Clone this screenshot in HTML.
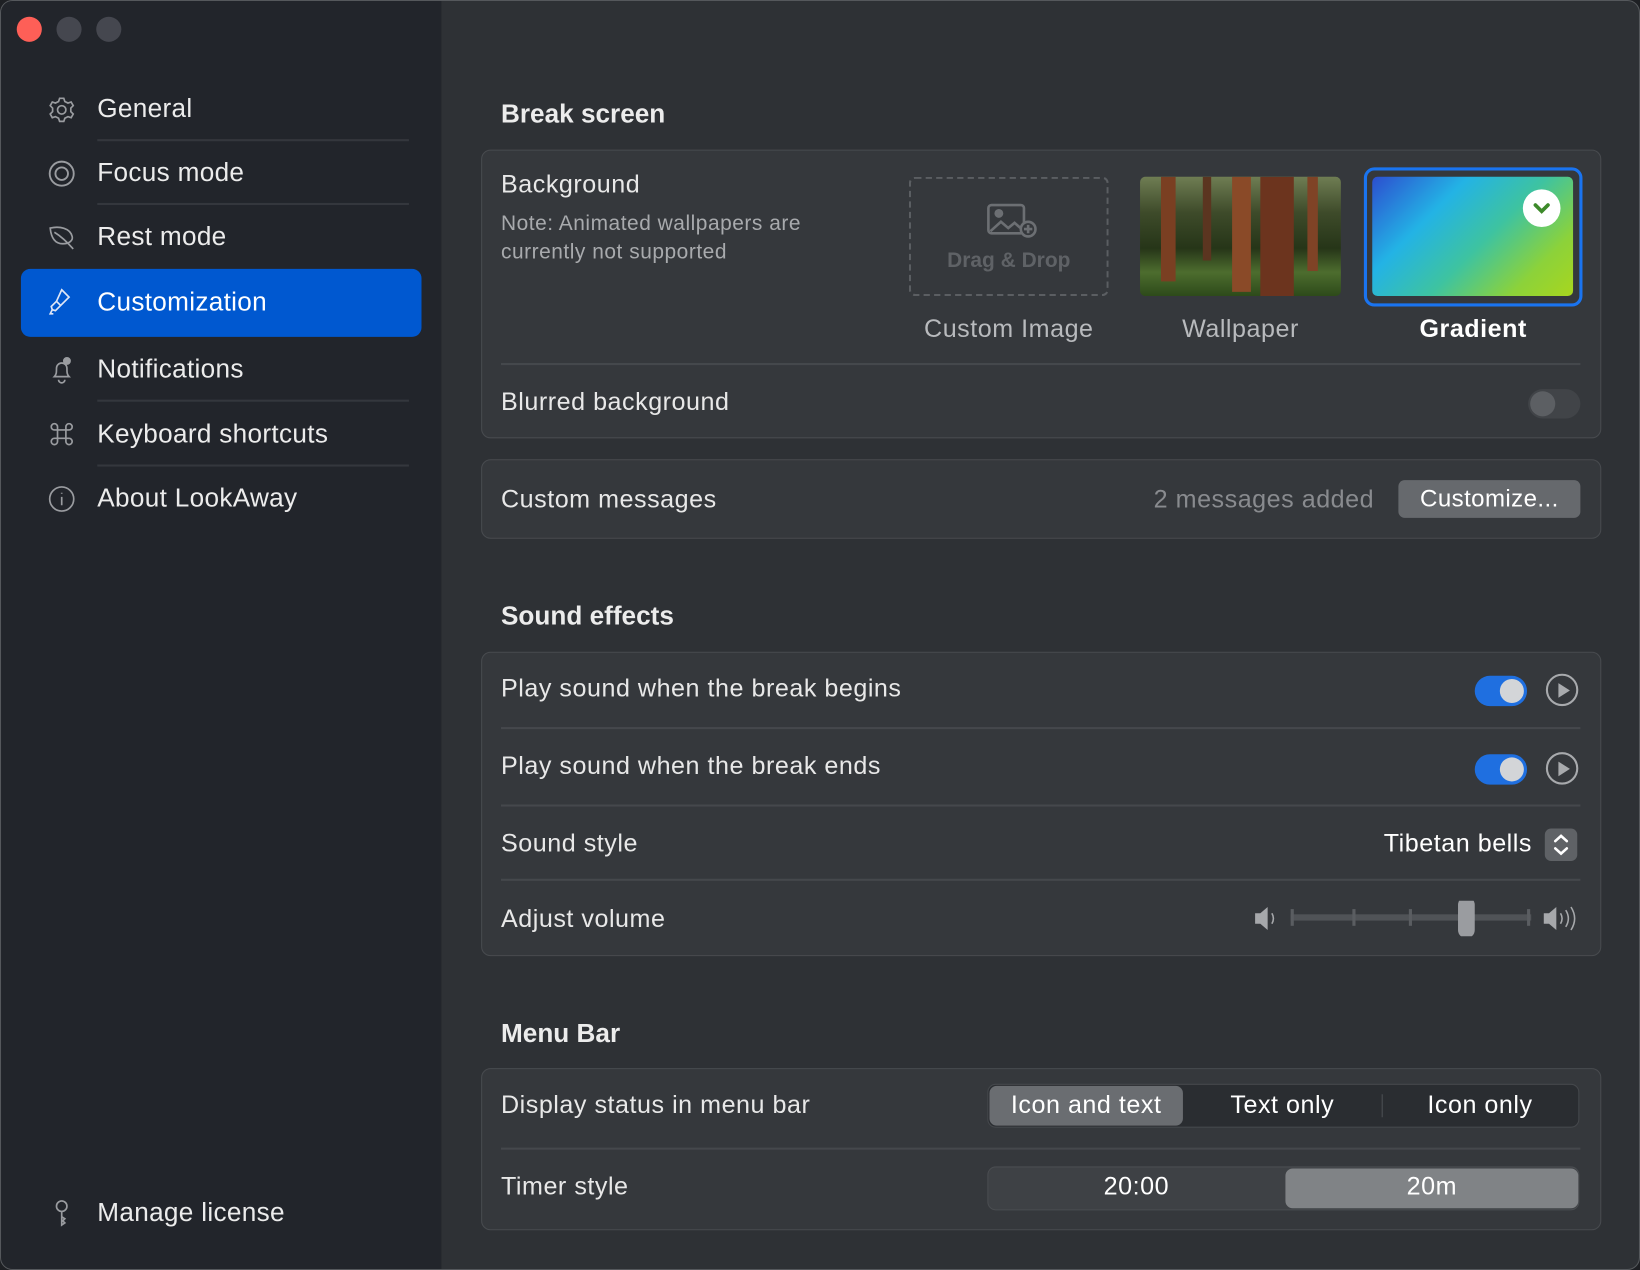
<!DOCTYPE html>
<html><head><meta charset="utf-8"><style>
*{box-sizing:border-box;margin:0;padding:0}
html,body{width:1640px;height:1270px;overflow:hidden;background:#1e2024}
#w{position:absolute;left:0;top:0;width:1568px;height:1214px;transform:scale(1.04592,1.04613);transform-origin:0 0;font-family:"Liberation Sans",sans-serif;color:#e6e6e6;background:#2e3135;border-radius:12px;overflow:hidden;border:1px solid #55585c}
#sb{position:absolute;left:0;top:0;width:421px;height:1214px;background:#22252b}
.dot{position:absolute;top:15px;width:24px;height:24px;border-radius:50%;background:#45474f}
.nav{position:absolute;left:92px;font-size:25px;color:#ececec;letter-spacing:0.3px}
.ic{position:absolute;left:44px;width:28px;height:28px}
.sep{position:absolute;left:92px;width:298px;height:2px;background:#34373d}
.h{position:absolute;left:478px;font-size:25px;font-weight:bold;color:#ececec}
.card{position:absolute;left:459px;width:1071px;background:#35383c;border:1.5px solid #484b4f;border-radius:9px}
.t{position:absolute;font-size:24px;color:#e8e8e8;letter-spacing:0.5px}
.ln{position:absolute;left:478px;width:1032px;height:2px;background:#45484c}
.tog{position:absolute;width:50px;height:29px;border-radius:15px;background:#1f6fe0}
.tog::after{content:"";position:absolute;right:3px;top:3px;width:23px;height:23px;border-radius:50%;background:#d3d5d8}
.play{position:absolute;width:31px;height:31px;border:2px solid #a8aaad;border-radius:50%}
.play::after{content:"";position:absolute;left:10px;top:7px;border-left:11px solid #a8aaad;border-top:7px solid transparent;border-bottom:7px solid transparent}
</style></head><body><div id="w">
<div id="sb">
<div class="dot" style="left:15px;background:#fe5f57"></div><div class="dot" style="left:53px"></div><div class="dot" style="left:91px"></div>
<svg class="ic" style="top:90px" viewBox="0 0 28 28" fill="none" stroke="#9a9ca0" stroke-width="1.6"><circle cx="14" cy="14" r="4"/><path d="M12 3h4l1 3 3 1.5 3-1 2 3.5-2.3 2.3v3.4L25 18l-2 3.5-3-1L17 22l-1 3h-4l-1-3-3-1.5-3 1L3 18l2.3-2.3v-3.4L3 10l2-3.5 3 1L11 6z"/></svg>
<div class="nav" style="top:89px">General</div><div class="sep" style="top:132px"></div>
<svg class="ic" style="top:151px" viewBox="0 0 28 28" fill="none" stroke="#9a9ca0" stroke-width="1.8"><circle cx="14" cy="14" r="11.5"/><circle cx="14" cy="14" r="6"/></svg>
<div class="nav" style="top:150px">Focus mode</div><div class="sep" style="top:193px"></div>
<svg class="ic" style="top:212px" viewBox="0 0 28 28" fill="none" stroke="#9a9ca0" stroke-width="1.6"><path d="M3 5c9-2 19 0 21 8 1 4-3 7-9 7-7 0-11-5-12-15zM7 9c5 3 11 8 18 16"/></svg>
<div class="nav" style="top:211px">Rest mode</div>
<div style="position:absolute;left:19px;top:256px;width:383px;height:65px;background:#0058d0;border-radius:9px"></div>
<svg class="ic" style="top:274px" viewBox="0 0 28 28" fill="none" stroke="#dfe6f5" stroke-width="1.6"><path d="M14 2l7 7-8 8-4-4zM9 13l-5 5 1 3 3 1 5-5"/><path d="M5 21l-2 4 3 0"/></svg>
<div class="nav" style="top:274px;color:#fff">Customization</div>
<svg class="ic" style="top:339px" viewBox="0 0 28 28" fill="none" stroke="#9a9ca0" stroke-width="1.6"><path d="M7 20c2-2 2-4 2-8a5 5 0 0 1 10 0c0 4 0 6 2 8zM11 23a3 3 0 0 0 6 0"/><circle cx="19" cy="5" r="3" fill="#9a9ca0"/></svg>
<div class="nav" style="top:338px">Notifications</div><div class="sep" style="top:381px"></div>
<svg class="ic" style="top:400px" viewBox="0 0 28 28" fill="none" stroke="#9a9ca0" stroke-width="1.6"><path d="M10 10h8v8h-8zM10 10H7a3 3 0 1 1 3-3zM18 10V7a3 3 0 1 1 3 3zM18 18h3a3 3 0 1 1-3 3zM10 18v3a3 3 0 1 1-3-3z"/></svg>
<div class="nav" style="top:400px">Keyboard shortcuts</div><div class="sep" style="top:443px"></div>
<svg class="ic" style="top:462px" viewBox="0 0 28 28" fill="none" stroke="#9a9ca0" stroke-width="1.6"><circle cx="14" cy="14" r="11.5"/><path d="M14 12v8M14 8v1"/></svg>
<div class="nav" style="top:461px">About LookAway</div>
<svg class="ic" style="top:1144px" viewBox="0 0 28 28" fill="none" stroke="#9a9ca0" stroke-width="1.6"><circle cx="14" cy="8" r="5"/><path d="M14 13v13l3-2-2-2 2-2-3-2"/></svg>
<div class="nav" style="top:1144px">Manage license</div>
</div>

<div class="h" style="top:94px">Break screen</div>
<div class="card" style="top:142px;height:276px"></div>
<div class="t" style="left:478px;top:162px">Background</div>
<div class="t" style="left:478px;top:200px;font-size:20px;color:#a8aaad;line-height:27px">Note: Animated wallpapers are<br>currently not supported</div>
<div style="position:absolute;left:868px;top:168px;width:191px;height:114px;border:2px dashed #5b5e62;border-radius:6px"></div>
<svg style="position:absolute;left:942px;top:192px" width="50" height="36" viewBox="0 0 50 36" fill="none" stroke="#6c6f73" stroke-width="2.5"><rect x="2" y="3" width="34" height="27" rx="3"/><circle cx="12" cy="11" r="3" fill="#6c6f73"/><path d="M4 28l10-9 7 6 6-5 8 7"/><circle cx="40" cy="26" r="7" fill="#35383c"/><path d="M40 22v8M36 26h8"/></svg>
<div class="t" style="left:868px;top:237px;width:191px;text-align:center;font-size:20px;font-weight:bold;color:#5f6266;letter-spacing:0">Drag &amp; Drop</div>
<div style="position:absolute;left:1089px;top:168px;width:192px;height:114px;border-radius:5px;background:linear-gradient(180deg,#6f7d53 0%,#3e4b2a 30%,#263518 60%,#4d6d2e 80%,#2d4a1a 100%);overflow:hidden">
<div style="position:absolute;left:20px;top:0;width:14px;height:100px;background:#7a3f22"></div>
<div style="position:absolute;left:88px;top:0;width:18px;height:110px;background:#8a4a28"></div>
<div style="position:absolute;left:115px;top:0;width:32px;height:114px;background:#6c341e"></div>
<div style="position:absolute;left:160px;top:0;width:10px;height:90px;background:#7f4326"></div>
<div style="position:absolute;left:60px;top:0;width:8px;height:80px;background:#5b3520"></div></div>
<div style="position:absolute;left:1303px;top:159px;width:209px;height:133px;border:3px solid #1a74f0;border-radius:10px"></div>
<div style="position:absolute;left:1311px;top:168px;width:192px;height:114px;border-radius:5px;background:linear-gradient(135deg,#2c4ecf 0%,#23b3e5 30%,#3ec3a0 55%,#8cd23a 80%,#a8d61e 100%)"></div>
<div style="position:absolute;left:1455px;top:180px;width:36px;height:36px;border-radius:50%;background:#fff"></div>
<svg style="position:absolute;left:1455px;top:180px" width="36" height="36" viewBox="0 0 36 36" fill="none" stroke="#3d8a2a" stroke-width="3.5" stroke-linecap="round"><path d="M12 15l6 6 6-6"/></svg>
<div class="t" style="left:868px;top:300px;width:191px;text-align:center;color:#b8babd">Custom Image</div>
<div class="t" style="left:1089px;top:300px;width:192px;text-align:center;color:#b8babd">Wallpaper</div>
<div class="t" style="left:1303px;top:300px;width:209px;text-align:center;font-weight:bold;color:#fff">Gradient</div>
<div class="ln" style="top:346px"></div>
<div class="t" style="left:478px;top:370px">Blurred background</div>
<div style="position:absolute;left:1460px;top:371px;width:50px;height:28px;border-radius:14px;background:#414448"><div style="position:absolute;left:2px;top:2px;width:24px;height:24px;border-radius:50%;background:#5c5f63"></div></div>

<div class="card" style="top:438px;height:76px"></div>
<div class="t" style="left:478px;top:463px">Custom messages</div>
<div class="t" style="left:1102px;top:463px;color:#898b8f">2 messages added</div>
<div style="position:absolute;left:1336px;top:458px;width:174px;height:36px;border-radius:6px;background:#66696d;font-size:23px;color:#fff;text-align:center;line-height:34px;letter-spacing:0.4px">Customize...</div>

<div class="h" style="top:574px">Sound effects</div>
<div class="card" style="top:622px;height:291px"></div>
<div class="t" style="left:478px;top:644px">Play sound when the break begins</div>
<div class="tog" style="left:1409px;top:645px"></div><div class="play" style="left:1477px;top:643px"></div>
<div class="ln" style="top:694px"></div>
<div class="t" style="left:478px;top:718px">Play sound when the break ends</div>
<div class="tog" style="left:1409px;top:720px"></div><div class="play" style="left:1477px;top:718px"></div>
<div class="ln" style="top:768px"></div>
<div class="t" style="left:478px;top:792px">Sound style</div>
<div class="t" style="left:1322px;top:792px;color:#fff">Tibetan bells</div>
<div style="position:absolute;left:1476px;top:791px;width:31px;height:31px;border-radius:6px;background:#5f6266"></div>
<svg style="position:absolute;left:1476px;top:791px" width="31" height="31" viewBox="0 0 31 31" fill="none" stroke="#fff" stroke-width="2.5" stroke-linecap="round"><path d="M10 12l5.5-5 5.5 5M10 19l5.5 5 5.5-5"/></svg>
<div class="ln" style="top:839px"></div>
<div class="t" style="left:478px;top:864px">Adjust volume</div>
<svg style="position:absolute;left:1195px;top:860px" width="315" height="34" viewBox="0 0 315 34" fill="#a6a8ab"><path d="M4 12h5l7-6v22l-7-6H4z"/><path d="M20 12q3 5 0 10" fill="none" stroke="#a6a8ab" stroke-width="1.5"/><rect x="38" y="13" width="230" height="6" fill="#505357"/><rect x="38" y="8" width="3" height="16" fill="#5a5d61"/><rect x="97" y="8" width="3" height="16" fill="#5a5d61"/><rect x="151" y="8" width="3" height="16" fill="#5a5d61"/><rect x="264" y="8" width="3" height="16" fill="#5a5d61"/><rect x="198" y="-4" width="16" height="40" rx="8" fill="#9a9ca0"/><path d="M280 12h5l7-6v22l-7-6h-5z"/><path d="M296 12q3 5 0 10M301 9q5 8 0 16M306 6q7 11 0 22" fill="none" stroke="#a6a8ab" stroke-width="1.5"/></svg>

<div class="h" style="top:973px">Menu Bar</div>
<div class="card" style="top:1020px;height:155px"></div>
<div class="t" style="left:478px;top:1042px">Display status in menu bar</div>
<div style="position:absolute;left:943px;top:1035px;width:566px;height:42px;border-radius:8px;background:#2a2d31;border:1px solid #45484c"></div>
<div style="position:absolute;left:945px;top:1037px;width:185px;height:38px;border-radius:7px;background:#6a6d71"></div>
<div style="position:absolute;left:1320px;top:1045px;width:1px;height:22px;background:#4d5054"></div>
<div class="t" style="left:945px;top:1042px;width:185px;text-align:center;color:#fff">Icon and text</div>
<div class="t" style="left:1130px;top:1042px;width:190px;text-align:center;color:#fff">Text only</div>
<div class="t" style="left:1320px;top:1042px;width:188px;text-align:center;color:#fff">Icon only</div>
<div class="ln" style="top:1096px"></div>
<div class="t" style="left:478px;top:1120px">Timer style</div>
<div style="position:absolute;left:943px;top:1114px;width:566px;height:42px;border-radius:8px;background:#3e4145;border:1px solid #4a4d51"></div>
<div style="position:absolute;left:1228px;top:1116px;width:280px;height:38px;border-radius:7px;background:#808386"></div>
<div class="t" style="left:943px;top:1120px;width:285px;text-align:center;color:#fff">20:00</div>
<div class="t" style="left:1228px;top:1120px;width:280px;text-align:center;color:#fff">20m</div>
</div></body></html>
